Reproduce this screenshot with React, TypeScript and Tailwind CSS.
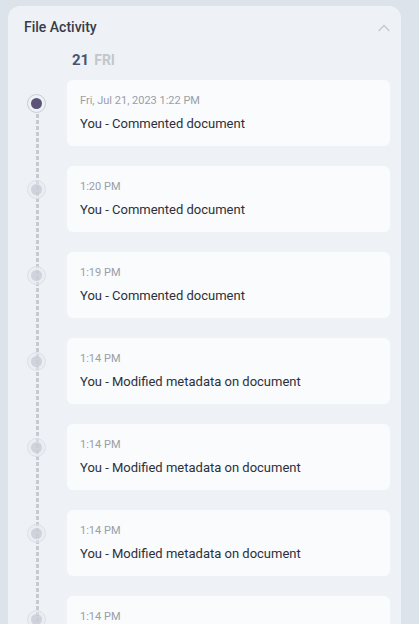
import { ChevronUp } from "lucide-react";

type ActivityType = {
  time: string;
  text: string;
};

const ACTIVITY_LIST: ActivityType[] = [
  { time: "Fri, Jul 21, 2023 1:22 PM", text: "You - Commented document" },
  { time: "1:20 PM", text: "You - Commented document" },
  { time: "1:19 PM", text: "You - Commented document" },
  { time: "1:14 PM", text: "You - Modified metadata on document" },
  { time: "1:14 PM", text: "You - Modified metadata on document" },
  { time: "1:14 PM", text: "You - Modified metadata on document" },
  { time: "1:14 PM", text: "You - Modified metadata on document" },
];

const Dot = ({ active }: { active: boolean }) => {
  if (active) {
    return (
      <div className="w-[19px] h-[19px] rounded-full border border-[#c9ccd6] bg-[#eef2f6] flex items-center justify-center">
        <div className="w-[11px] h-[11px] rounded-full bg-[#5b5478]" />
      </div>
    );
  }
  return (
    <div className="w-[19px] h-[19px] rounded-full border border-[#dde0e8] bg-[#e6e9ef]/50 flex items-center justify-center">
      <div className="w-[11px] h-[11px] rounded-full bg-[#c3c7d0]/70" />
    </div>
  );
};

const ActivityItem = ({ item, index }: { item: ActivityType; index: number }) => {
  return (
    <div className="flex">
      <div className="w-[59px] shrink-0 relative">
        <div className="absolute left-[19px] top-[14px]">
          <Dot active={index === 0} />
        </div>
      </div>
      <div className="flex-1 h-[66px] bg-[#f9fbfd] rounded-md pl-[13px] pt-[13px]">
        <div className="text-[11px] leading-[16px] text-[#9a9ea7]">{item.time}</div>
        <div className="text-[13px] leading-[18px] text-[#2c303a] mt-[6px]">{item.text}</div>
      </div>
    </div>
  );
};

const App = () => {
  return (
    <div className="h-screen overflow-hidden bg-[#dde3ea] pl-2 pt-[6px] pr-[18px] font-['Roboto',sans-serif]">
      <div className="bg-[#eef2f6] rounded-xl min-h-[700px]">
        <div className="h-[42px] flex items-center justify-between pl-4 pr-[7px]">
          <h2 className="text-[14px] font-medium text-[#363c4a]">File Activity</h2>
          <ChevronUp className="w-[20px] h-[20px] text-[#c8ccd3] mt-[2px]" strokeWidth={2} />
        </div>
        <div className="h-[32px] flex items-center pl-[64px] pb-[8px] text-[15px] font-bold">
          <span className="text-[#4d5270]">21</span>
          <span className="text-[#c2c6cd] ml-[5px] text-[14px]">FRI</span>
        </div>
        <div className="relative pr-[11px] flex flex-col gap-5">
          <div className="absolute left-[28px] top-[28px] bottom-0 w-[3px] bg-[repeating-linear-gradient(to_bottom,#c6cad1_0_4px,transparent_4px_6px)]" />
          {ACTIVITY_LIST.map((item, key) => (
            <ActivityItem key={key} item={item} index={key} />
          ))}
        </div>
      </div>
    </div>
  );
};

export default App;
